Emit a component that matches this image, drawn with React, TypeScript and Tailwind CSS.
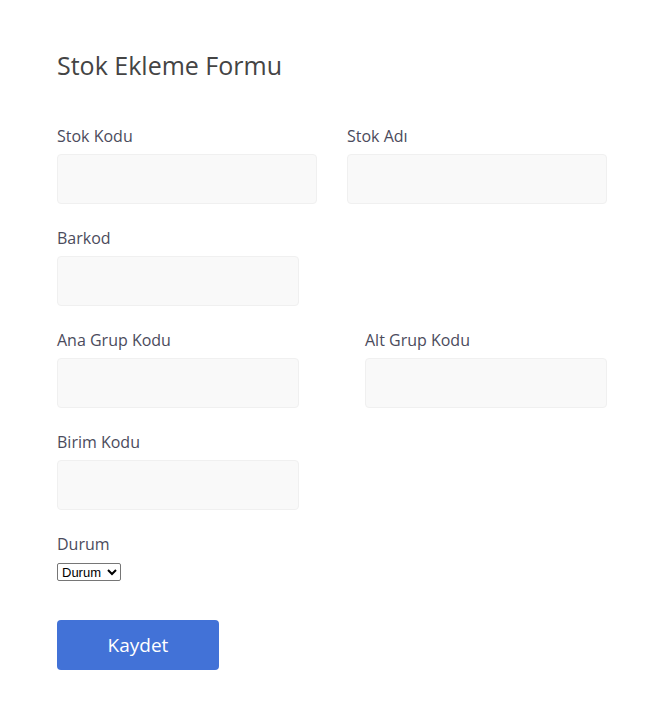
export default function App() {
  return (
    <div className="min-h-screen bg-white font-['Open_Sans',sans-serif]">
      <div className="ml-[57px] w-[550px] pt-[47px]">
        <h1 className="text-[25px] leading-[36px] text-[#444]">Stok Ekleme Formu</h1>

        <div className="mt-[41px] grid grid-cols-2 gap-x-[30px]">
          <Field label="Stok Kodu" />
          <Field label="Stok Adı" />
        </div>

        <div className="mt-[22px] w-[242px]">
          <Field label="Barkod" />
        </div>

        <div className="mt-[22px] flex justify-between">
          <div className="w-[242px]">
            <Field label="Ana Grup Kodu" />
          </div>
          <div className="w-[242px]">
            <Field label="Alt Grup Kodu" />
          </div>
        </div>

        <div className="mt-[22px] w-[242px]">
          <Field label="Birim Kodu" />
        </div>

        <div className="mt-[22px]">
          <label className="block text-[16px] leading-[24px] text-[#4b4b5c]">Durum</label>
          <select className="mt-[7px] h-[18px] w-[64px] border border-[#767676] bg-white text-[13px] leading-none text-black font-['Liberation_Sans',sans-serif] rounded-[2px]">
            <option>Durum</option>
          </select>
        </div>

        <div className="mt-[37px]">
          <button className="h-[50px] w-[162px] rounded-[4px] bg-[#4272d7] text-[19px] font-medium text-white">
            Kaydet
          </button>
        </div>
      </div>
    </div>
  );
}

function Field({ label }: { label: string }) {
  return (
    <div>
      <label className="block text-[16px] leading-[24px] text-[#4b4b5c]">{label}</label>
      <input className="mt-[6px] block h-[50px] w-full rounded-[4px] border border-[#f0f0f0] bg-[#f9f9f9] outline-none" />
    </div>
  );
}
